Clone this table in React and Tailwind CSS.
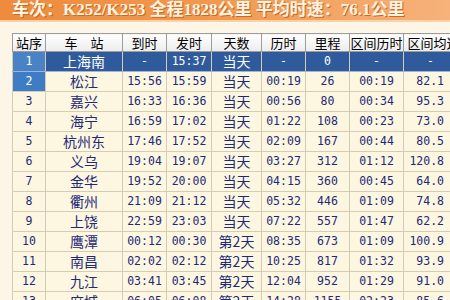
import React from 'react';

const rows = [
  ['1', '上海南', '-', '15:37', '当天', '-', '0', '-', '-'],
  ['2', '松江', '15:56', '15:59', '当天', '00:19', '26', '00:19', '82.1'],
  ['3', '嘉兴', '16:33', '16:36', '当天', '00:56', '80', '00:34', '95.3'],
  ['4', '海宁', '16:59', '17:02', '当天', '01:22', '108', '00:23', '73.0'],
  ['5', '杭州东', '17:46', '17:52', '当天', '02:09', '167', '00:44', '80.5'],
  ['6', '义乌', '19:04', '19:07', '当天', '03:27', '312', '01:12', '120.8'],
  ['7', '金华', '19:52', '20:00', '当天', '04:15', '360', '00:45', '64.0'],
  ['8', '衢州', '21:09', '21:12', '当天', '05:32', '446', '01:09', '74.8'],
  ['9', '上饶', '22:59', '23:03', '当天', '07:22', '557', '01:47', '62.2'],
  ['10', '鹰潭', '00:12', '00:30', '第2天', '08:35', '673', '01:09', '100.9'],
  ['11', '南昌', '02:02', '02:12', '第2天', '10:25', '817', '01:32', '93.9'],
  ['12', '九江', '03:41', '03:45', '第2天', '12:04', '952', '01:29', '91.0'],
  ['13', '麻城', '06:05', '06:08', '第2天', '14:28', '1155', '02:23', '85.6'],
];

const heads = ['站序', '车\u3000站', '到时', '发时', '天数', '历时', '里程', '区间历时', '区间均速'];
const widths = ['w-[33px]', 'w-[77px]', 'w-[44px]', 'w-[45px]', 'w-[50px]', 'w-[44px]', 'w-[44px]', 'w-[54px]', 'w-[60px]'];

const cjk = { fontFamily: '"Noto Sans CJK SC", sans-serif' };
const mono = { fontFamily: '"DejaVu Sans Mono", monospace' };

export default function App() {
  return (
    <div className="w-[450px] h-[300px] overflow-hidden bg-[#fdf6e6]">
      <div className="h-[20px] bg-gradient-to-r from-[#ee8a3c] via-[#f29a50] to-[#f6b27a] flex items-center pl-[12px]">
        <span
          className="text-[17px] leading-[20px] font-bold text-[#fff3e4] whitespace-nowrap [text-shadow:1px_1px_0_#c86a20]"
          style={{ fontFamily: '"Liberation Serif", "Noto Sans CJK SC", serif' }}>
          车次：K252/K253 全程1828公里 平均时速：76.1公里
        </span>
      </div>
      <div className="h-[2px] bg-[#f9d2a8]" />
      <div className="pl-[12px] pt-[11px] w-[480px]">
        <table className="border-collapse table-fixed w-[451px]">
          <colgroup>
            {widths.map((w, i) => (
              <col key={i} className={w} />
            ))}
          </colgroup>
          <thead>
            <tr className="h-[18px]">
              {heads.map((h, i) => (
                <th
                  key={i}
                  className="p-0 border border-[#9c9c9c] bg-gradient-to-b from-[#ffffff] to-[#ececec] text-black text-[13px] leading-[17px] font-normal text-center whitespace-nowrap overflow-hidden"
                  style={cjk}>
                  {h}
                </th>
              ))}
            </tr>
          </thead>
          <tbody>
            {rows.map((r, ri) => {
              const sel = ri === 0;
              return (
                <tr key={ri} className={`h-[20px] ${sel ? 'bg-[#2f5b9c]' : 'bg-[#fdf6e0]'}`}>
                  {r.map((c, ci) => {
                    const isText = ci === 1 || ci === 4;
                    const first = ci === 0;
                    const base = 'p-0 border border-[#d4ccb4] leading-[19px] whitespace-nowrap overflow-hidden';
                    let color = sel ? 'text-white' : 'text-[#1c2a78]';
                    let bg = '';
                    if (first && (ri === 0 || ri === 1)) {
                      bg = ri === 0 ? 'bg-[#4a82c6]' : 'bg-[#3f7cc6]';
                      color = 'text-white';
                    }
                    const align = ci === 8 ? (sel ? 'text-center pr-[6px]' : 'text-right pr-[19px]') : 'text-center';
                    const size = isText ? 'text-[14px]' : 'text-[11.5px]';
                    const dotted = sel ? 'border-b-[#9fb4d8] border-b-dotted' : '';
                    return (
                      <td
                        key={ci}
                        className={`${base} ${color} ${bg} ${align} ${size} ${dotted}`}
                        style={isText ? cjk : mono}>
                        {c}
                      </td>
                    );
                  })}
                </tr>
              );
            })}
          </tbody>
        </table>
      </div>
    </div>
  );
}
